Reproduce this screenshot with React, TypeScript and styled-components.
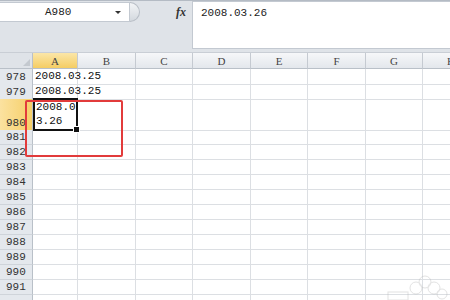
import styled, { createGlobalStyle } from 'styled-components';

const GlobalStyle = createGlobalStyle`
  html, body {
    margin: 0;
    padding: 0;
    background: #ffffff;
    overflow: hidden;
  }
  * {
    box-sizing: border-box;
  }
`;

const Sheet = styled.div`
  position: relative;
  width: 450px;
  height: 300px;
  overflow: hidden;
  font-family: "Liberation Mono", "DejaVu Sans Mono", monospace;
  font-size: 11px;
  color: #222;
  background: #fff;
`;

const FormulaBar = styled.div`
  display: flex;
  height: 53px;
  background: #dfe3e8;
  border-top: 1px solid #b4bbc4;
  padding-top: 1px;
  border-bottom: 1px solid #c9ced5;
`;

const LeftTools = styled.div`
  width: 192px;
  display: flex;
  align-items: flex-start;
`;

const NameBox = styled.div`
  width: 130px;
  height: 20px;
  background: #fff;
  border: 1px solid #c3c9d1;
  border-left: none;
  display: flex;
  align-items: center;
  padding-left: 45px;
  position: relative;
  color: #222;
`;

const DropArrow = styled.span`
  position: absolute;
  right: 8px;
  top: 8px;
  width: 0;
  height: 0;
  border-left: 3px solid transparent;
  border-right: 3px solid transparent;
  border-top: 3px solid #333;
`;

const Grip = styled.div`
  width: 12px;
  height: 20px;
  margin-left: -2px;
  border-radius: 0 10px 10px 0;
  background: linear-gradient(#f3f5f7, #d3d8de);
  border: 1px solid #b8bec6;
  border-left: none;
`;

const Fx = styled.span`
  margin-left: 36px;
  margin-top: 3px;
  font-family: "Liberation Serif", serif;
  font-style: italic;
  font-weight: bold;
  font-size: 12px;
  color: #333;
`;

const FormulaInput = styled.div`
  flex: 1;
  height: 48px;
  background: #fff;
  border: 1px solid #c3c9d1;
  border-right: none;
  padding: 5px 0 0 8px;
  margin-top: -1px;
  color: #222;
`;

const Row = styled.div<{ $h: number }>`
  display: grid;
  grid-template-columns: 33px 45px 58px 57px 58px 57px 58px 57px 57px;
  height: ${(p) => p.$h}px;
`;

const HeaderCell = styled.div<{ $active?: boolean }>`
  display: flex;
  align-items: center;
  justify-content: center;
  font-family: "Liberation Serif", serif;
  font-size: 11px;
  color: #444;
  background: ${(p) =>
    p.$active
      ? 'linear-gradient(#fbe6a8, #f5cd63)'
      : 'linear-gradient(#f6f7f9, #e3e7ec)'};
  border-right: 1px solid #c5cad1;
  border-bottom: 1px solid #b9c0c8;
`;

const Corner = styled.div`
  position: relative;
  background: #dfe3e8;
  border-right: 1px solid #b9c0c8;
  border-bottom: 1px solid #b9c0c8;
  &::after {
    content: '';
    position: absolute;
    right: 2px;
    bottom: 2px;
    border-left: 7px solid transparent;
    border-bottom: 7px solid #c4c9cf;
  }
`;

const RowHead = styled.div<{ $active?: boolean }>`
  display: flex;
  align-items: flex-end;
  padding: 0 0 1px 6px;
  color: #333;
  background: ${(p) => (p.$active ? 'linear-gradient(90deg, #fbe2a0, #f6cf68)' : '#e4e8ed')};
  border-right: 1px solid #b9c0c8;
  border-bottom: 1px solid #cfd4da;
`;

const Cell = styled.div`
  display: flex;
  align-items: flex-end;
  padding: 0 0 1px 2px;
  border-right: 1px solid #dcdfe3;
  border-bottom: 1px solid #dcdfe3;
  white-space: pre;
  line-height: 14px;
  color: #111;
`;

const ActiveCell = styled(Cell)`
  position: relative;
  border: 2px solid #111;
  margin: -1px 0 0 0;
  padding: 0 0 1px 1px;
  &::after {
    content: '';
    position: absolute;
    right: -4px;
    bottom: -4px;
    width: 5px;
    height: 5px;
    background: #111;
    border: 1px solid #fff;
  }
`;

const Highlight = styled.div`
  position: absolute;
  left: 25px;
  top: 100px;
  width: 98px;
  height: 57px;
  border: 2px solid #e23b3b;
  border-radius: 2px;
`;

const Watermark = styled.svg`
  position: absolute;
  right: 2px;
  bottom: 0;
  opacity: 0.35;
`;

const columns = ['A', 'B', 'C', 'D', 'E', 'F', 'G', 'H'];

const rows: { n: number | null; h: number; a?: string; active?: boolean }[] = [
  { n: 978, h: 15, a: '2008.03.25' },
  { n: 979, h: 15, a: '2008.03.25' },
  { n: 980, h: 31, a: '2008.0\n3.26', active: true },
  { n: 981, h: 15 },
  { n: 982, h: 15 },
  { n: 983, h: 15 },
  { n: 984, h: 15 },
  { n: 985, h: 15 },
  { n: 986, h: 15 },
  { n: 987, h: 15 },
  { n: 988, h: 15 },
  { n: 989, h: 15 },
  { n: 990, h: 15 },
  { n: 991, h: 15 },
  { n: null, h: 15 },
];

const App = () => {
  return (
    <Sheet>
      <GlobalStyle />
      <FormulaBar>
        <LeftTools>
          <NameBox>
            A980
            <DropArrow />
          </NameBox>
          <Grip />
          <Fx>fx</Fx>
        </LeftTools>
        <FormulaInput>2008.03.26</FormulaInput>
      </FormulaBar>
      <Row $h={16}>
        <Corner />
        {columns.map((c) => (
          <HeaderCell key={c} $active={c === 'A'}>
            {c}
          </HeaderCell>
        ))}
      </Row>
      {rows.map((r, i) => (
        <Row key={i} $h={r.h}>
          <RowHead $active={r.active}>{r.n ?? ''}</RowHead>
          {r.active ? <ActiveCell>{r.a}</ActiveCell> : <Cell>{r.a ?? ''}</Cell>}
          {columns.slice(1).map((c) => (
            <Cell key={c} />
          ))}
        </Row>
      ))}
      <Highlight />
      <Watermark width="70" height="26" viewBox="0 0 70 26">
        <g fill="none" stroke="#b0b0b0" strokeWidth="1">
          <circle cx="38" cy="14" r="6" />
          <circle cx="47" cy="8" r="6" />
          <circle cx="56" cy="14" r="6" />
          <circle cx="64" cy="20" r="5" />
          <rect x="10" y="18" width="20" height="8" />
        </g>
      </Watermark>
    </Sheet>
  );
};

export default App;
